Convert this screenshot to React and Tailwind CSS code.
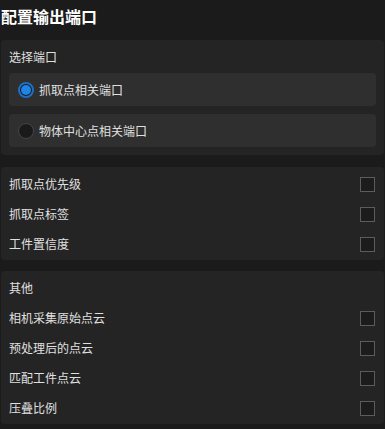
import React, { useState } from 'react';

const font = { fontFamily: '"Noto Sans CJK SC", "Noto Sans", sans-serif' };

function Checkbox({ checked, onChange }) {
    return (
        <button
            onClick={onChange}
            className={`h-[15px] w-[15px] border ${checked ? 'border-[#1e7ad8] bg-[#1e7ad8]' : 'border-[#5c5c5c] bg-[#1c1c1c]'}`}
        />
    );
}

function Radio({ checked }) {
    return checked ? (
        <span className="flex h-[16px] w-[16px] items-center justify-center rounded-full border-2 border-[#1f6fc0] bg-[#1b1b1b]">
            <span className="h-[10px] w-[10px] rounded-full bg-[#1e84e6]" />
        </span>
    ) : (
        <span className="h-[16px] w-[16px] rounded-full border border-[#454545] bg-[#1a1a1a]" />
    );
}

function CheckRow({ label, checked, onChange }) {
    return (
        <div className="flex h-[30px] items-center justify-between pl-2 pr-[9px]">
            <span>{label}</span>
            <Checkbox checked={checked} onChange={onChange} />
        </div>
    );
}

export default function App() {
    const [port, setPort] = useState(0);
    const [checks, setChecks] = useState({});
    const toggle = (k) => setChecks((c) => ({ ...c, [k]: !c[k] }));

    const ports = ['抓取点相关端口', '物体中心点相关端口'];
    const group1 = ['抓取点优先级', '抓取点标签', '工件置信度'];
    const group2 = ['相机采集原始点云', '预处理后的点云', '匹配工件点云', '压叠比例'];

    return (
        <div className="h-[429px] w-[385px] bg-[#1b1b1b] text-[12px] text-[#e0e0e0]" style={font}>
            <h1 className="pl-px pt-[4px] text-[16px] font-bold leading-[24px] text-white">配置输出端口</h1>

            {/* port selection */}
            <div className="mx-px mt-[12px] rounded-[4px] bg-[#242424] pb-[8px]">
                <div className="flex h-[33px] items-center pl-2 pt-[1px]">选择端口</div>
                <div className="flex flex-col gap-2 px-2">
                    {ports.map((p, i) => (
                        <button
                            key={p}
                            onClick={() => setPort(i)}
                            className="flex h-[33px] items-center gap-[5px] rounded-[4px] bg-[#2f2f2f] pl-[9px] text-left"
                        >
                            <Radio checked={port === i} />
                            <span>{p}</span>
                        </button>
                    ))}
                </div>
            </div>

            <div className="mx-px mt-[12px] rounded-[4px] bg-[#242424] pb-[1px] pt-[2px]">
                {group1.map((g) => (
                    <CheckRow key={g} label={g} checked={!!checks[g]} onChange={() => toggle(g)} />
                ))}
            </div>

            <div className="mx-px mt-[11px] rounded-[4px] bg-[#242424] pb-[1px] pt-[2px]">
                <div className="flex h-[30px] items-center pl-2">其他</div>
                {group2.map((g) => (
                    <CheckRow key={g} label={g} checked={!!checks[g]} onChange={() => toggle(g)} />
                ))}
            </div>
        </div>
    );
}
